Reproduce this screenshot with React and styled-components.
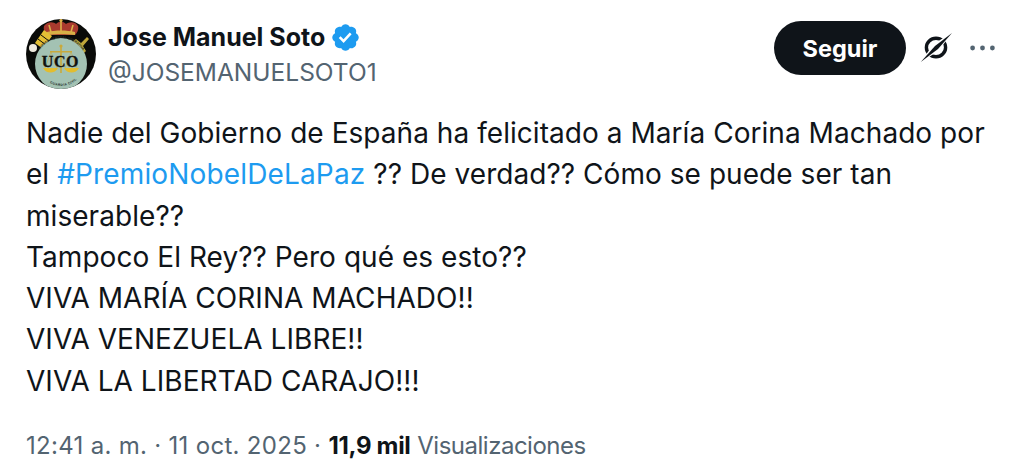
import React from 'react';
import styled, { createGlobalStyle } from 'styled-components';

const Global = createGlobalStyle`
  html, body { margin: 0; padding: 0; background: #fff; }
  body { width: 1011px; height: 473px; overflow: hidden; font-family: Inter, "Open Sans", sans-serif; }
`;

const Tweet = styled.article`
  box-sizing: border-box;
  width: 1011px;
  height: 473px;
  padding: 19px 16px 0 26px;
  color: #0f1419;
`;

const Header = styled.header`
  display: flex;
  align-items: flex-start;
  height: 70px;
`;

const Avatar = styled.svg`
  width: 70px;
  height: 70px;
  flex: none;
`;

const Author = styled.div`
  flex: 1;
  margin-left: 12px;
  padding-top: 2px;
`;

const NameRow = styled.div`
  display: flex;
  align-items: center;
  gap: 5px;
  height: 32px;
`;

const Name = styled.span`
  font-size: 25px;
  font-weight: 700;
  white-space: nowrap;
`;

const Handle = styled.div`
  margin-top: 3px;
  font-size: 24.5px;
  line-height: 32px;
  color: #536471;
`;

const Actions = styled.div`
  display: flex;
  align-items: center;
  height: 54px;
  margin-top: 2px;
`;

const Follow = styled.button`
  width: 132px;
  height: 54px;
  border: 0;
  border-radius: 27px;
  background: #0f1419;
  color: #fff;
  font-family: inherit;
  font-size: 23.5px;
  font-weight: 700;
`;

const IconSlot = styled.svg`
  display: block;
  flex: none;
  margin-left: ${(p) => p.$gap}px;
`;

const Body = styled.div`
  margin-top: 24px;
  font-size: 28px;
  line-height: 41.3px;
  letter-spacing: 0.05px;
  white-space: nowrap;
`;

const Tag = styled.span`
  color: #1d9bf0;
  letter-spacing: 0.15px;
`;

const Meta = styled.div`
  margin-top: 28px;
  font-size: 24px;
  line-height: 32px;
  color: #536471;
  white-space: pre;
`;

const Stamp = styled.span`
  letter-spacing: 0.3px;
`;

const Views = styled.strong`
  font-weight: 700;
  letter-spacing: -0.3px;
  color: #0f1419;
`;

const ViewsLabel = styled.span`
  letter-spacing: -0.5px;
`;

function UcoAvatar() {
  return (
    <Avatar viewBox="0 0 70 70">
      <defs>
        <clipPath id="round"><circle cx="35" cy="35" r="35" /></clipPath>
        <path id="ringTop" d="M13 32.5A25 25 0 0 1 57 32.5" />
        <path id="ringBottom" d="M19 60.5A23 23 0 0 0 51 60.5" />
      </defs>
      <g clipPath="url(#round)">
        <rect width="70" height="70" fill="#0a0b09" />
        <path d="M18 7c4-5 10-4 12-2 3-3 7-3 10 0 3-2 9-3 12 2 1 4-1 7-3 9H21c-2-2-4-5-3-9z" fill="#a83a2e" />
        <path d="M21 13c8-2 20-2 28 0v3c-8-1-20-1-28 0z" fill="#d6b046" />
        <path d="M23 6l2 7M35 1v12M47 6l-2 7" stroke="#dcb24a" strokeWidth="1.6" fill="none" />
        <circle cx="35" cy="1.5" r="1.6" fill="#dcb24a" />
        <path d="M9 24L18 11l8 6-9 13z" fill="#e3bf35" />
        <path d="M12 20l8 6M15 16l8 6" stroke="#0a0b09" strokeWidth="1" />
        <circle cx="7" cy="29" r="4" fill="#efeadf" />
        <path d="M47 22l3-2 5 4 6-6 2 2-6 7 3 5-2 2-5-4-2 1z" fill="#c0a63a" />
        <circle cx="35" cy="45" r="26" fill="#a3c2b3" />
        <text fontFamily="Liberation Sans, sans-serif" fontWeight="700" fontSize="3.4" fill="#26312b">
          <textPath href="#ringTop" startOffset="2">UNIDAD CENTRAL OPERATIVA</textPath>
        </text>
        <text fontFamily="Liberation Sans, sans-serif" fontWeight="700" fontSize="3.4" fill="#26312b" letterSpacing="0.3">
          <textPath href="#ringBottom" startOffset="6">GUARDIA CIVIL</textPath>
        </text>
        <path d="M34.2 27h1.6v27h-1.6zM24 32h22v1.5H24z" fill="#c9a93a" />
        <circle cx="35" cy="27" r="1.6" fill="#c9a93a" />
        <path d="M25 33l-6 16M25 33l6 16M45 33l-6 16M45 33l6 16" stroke="#c9a93a" strokeWidth="0.5" fill="none" />
        <path d="M17 49c3 6 12 6 15 0zM38 49c3 6 12 6 15 0z" fill="#e2bd2e" />
        <text x="34.5" y="48" textAnchor="middle" fontFamily="Liberation Serif, serif" fontWeight="700" fontSize="16" letterSpacing="0.6" fill="#10120e" stroke="#10120e" strokeWidth="0.35">UCO</text>
      </g>
    </Avatar>
  );
}

function Verified() {
  return (
    <svg width="31" height="31" viewBox="0 0 22 22" style={{ flex: 'none' }}>
      <path fill="#1d9bf0" d="M20.396 11c-.018-.646-.215-1.275-.57-1.816-.354-.54-.852-.972-1.438-1.246.223-.607.27-1.264.14-1.897-.131-.634-.437-1.218-.882-1.687-.47-.445-1.053-.75-1.687-.882-.633-.13-1.29-.083-1.897.14-.273-.587-.704-1.086-1.245-1.44S11.647 1.62 11 1.604c-.646.017-1.273.213-1.813.568s-.969.854-1.24 1.44c-.608-.223-1.267-.272-1.902-.14-.635.13-1.22.436-1.69.882-.445.47-.749 1.055-.878 1.688-.13.633-.08 1.29.144 1.896-.587.274-1.087.705-1.443 1.245-.356.54-.555 1.17-.574 1.817.02.647.218 1.276.574 1.817.356.54.856.972 1.443 1.245-.224.606-.274 1.263-.144 1.896.13.634.433 1.218.877 1.688.47.443 1.054.747 1.687.878.633.132 1.29.084 1.897-.136.274.586.705 1.084 1.246 1.439.54.354 1.17.551 1.816.569.647-.016 1.276-.213 1.817-.567s.972-.854 1.245-1.44c.604.239 1.266.296 1.903.164.636-.132 1.22-.447 1.68-.907.46-.46.776-1.044.908-1.681s.075-1.299-.165-1.903c.586-.274 1.084-.705 1.439-1.246.354-.54.551-1.17.569-1.816z" />
      <path fill="#fff" d="M9.662 14.85l-3.429-3.428 1.293-1.302 2.072 2.072 4.4-4.794 1.347 1.246z" />
    </svg>
  );
}

export default function App() {
  return (
    <>
      <Global />
      <Tweet>
        <Header>
          <UcoAvatar />
          <Author>
            <NameRow>
              <Name>Jose Manuel Soto</Name>
              <Verified />
            </NameRow>
            <Handle>@JOSEMANUELSOTO1</Handle>
          </Author>
          <Actions>
            <Follow>Seguir</Follow>
            <IconSlot $gap={14} width="33" height="32" viewBox="0 0 33 32">
              <ellipse cx="16" cy="15.5" rx="9.6" ry="9.2" fill="none" stroke="#0f1419" strokeWidth="3.4" />
              <path d="M32 0.5L13 12.5 0.5 30.5 19 18.5z" fill="#fff" />
              <path d="M32 1L15 14 0.8 30 18 17z" fill="#0f1419" />
            </IconSlot>
            <IconSlot $gap={17} width="25" height="6" viewBox="0 0 25 6">
              <circle cx="2.6" cy="3" r="2.4" fill="#536471" />
              <circle cx="12.5" cy="3" r="2.4" fill="#536471" />
              <circle cx="22.4" cy="3" r="2.4" fill="#536471" />
            </IconSlot>
          </Actions>
        </Header>
        <Body>
          Nadie del Gobierno de España ha felicitado a María Corina Machado por<br />
          el <Tag>#PremioNobelDeLaPaz</Tag> ?? De verdad?? Cómo se puede ser tan<br />
          miserable??<br />
          Tampoco El Rey?? Pero qué es esto??<br />
          VIVA MARÍA CORINA MACHADO!!<br />
          VIVA VENEZUELA LIBRE!!<br />
          VIVA LA LIBERTAD CARAJO!!!
        </Body>
        <Meta><Stamp>12:41 a. m. · 11 oct. 2025 · </Stamp><Views>11,9 mil</Views> <ViewsLabel>Visualizaciones</ViewsLabel></Meta>
      </Tweet>
    </>
  );
}
